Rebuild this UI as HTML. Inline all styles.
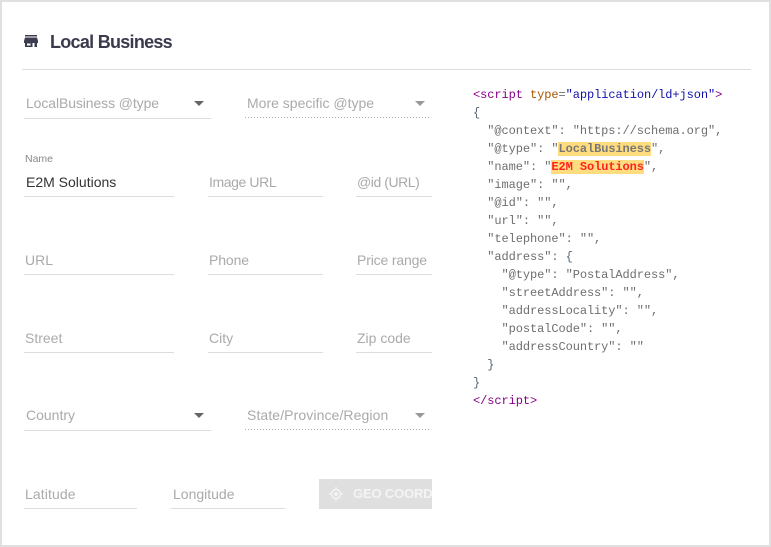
<!DOCTYPE html>
<html><head><meta charset="utf-8">
<style>
html,body{margin:0;padding:0}
body{width:771px;height:547px;position:relative;overflow:hidden;background:#fff;font-family:"Liberation Sans",sans-serif}
.frame{position:absolute;left:0;top:0;width:771px;height:547px;box-sizing:border-box;border:2px solid #e0e0e0}
.t{position:absolute;font-size:14px;line-height:18px;color:#aaa;white-space:nowrap}
.l{position:absolute;height:1px;background:#ddd}
.d{position:absolute;height:1px;background:repeating-linear-gradient(90deg,#aaa 0 1px,transparent 1px 3px)}
.a{position:absolute;width:0;height:0;border-left:5px solid transparent;border-right:5px solid transparent}
pre{position:absolute;left:473px;top:86px;margin:0;font:12px/18px "Liberation Mono",monospace;letter-spacing:-.08px;color:#6e6e6e}
.g{color:#808}.b{color:#11a}.p{color:#a50}.c{color:#567}
.h{background:#ffdd7f;color:#777;font-weight:bold}
.r{background:#ffdd7f;color:#f22;font-weight:bold}
</style></head><body>
<div class="frame"></div>

<svg style="position:absolute;left:24px;top:35px" width="14" height="13" viewBox="0 0 14 13">
<path d="M1 0h12v1.500H1z M1 2.500h12L14 6v2H0V6z M1 8h7.500v4H1z M10.500 8H13v4h-2.500z" fill="#3c3c50"/>
<path d="M3 8.500h3.500v2H3z" fill="#fff"/>
</svg>
<div class="t" style="left:50px;top:31px;font-size:18px;line-height:22px;font-weight:bold;color:#3a3a4e;letter-spacing:-.72px">Local Business</div>
<div class="l" style="left:22px;top:69px;width:729px"></div>

<div class="t" style="left:26px;top:94px;letter-spacing:-.1px">LocalBusiness @type</div>
<div class="a" style="left:194px;top:101px;border-top:5px solid #666"></div>
<div class="l" style="left:24px;top:118px;width:187px"></div>

<div class="t" style="left:247px;top:94px">More specific @type</div>
<div class="a" style="left:415px;top:101px;border-top:5px solid #999"></div>
<div class="d" style="left:245px;top:117px;width:186px"></div>

<div class="t" style="left:25px;top:153px;font-size:10.500px;line-height:12px;color:#888">Name</div>
<div class="t" style="left:26px;top:173px;color:#333">E2M Solutions</div>
<div class="l" style="left:24px;top:196px;width:150px"></div>
<div class="t" style="left:209px;top:173px;letter-spacing:-.4px">Image URL</div>
<div class="l" style="left:208px;top:196px;width:115px"></div>
<div class="t" style="left:357px;top:173px;letter-spacing:-.44px">@id (URL)</div>
<div class="l" style="left:356px;top:196px;width:76px"></div>

<div class="t" style="left:25px;top:251px">URL</div>
<div class="l" style="left:24px;top:274px;width:150px"></div>
<div class="t" style="left:209px;top:251px;letter-spacing:-.1px">Phone</div>
<div class="l" style="left:208px;top:274px;width:115px"></div>
<div class="t" style="left:357px;top:251px;letter-spacing:-.15px">Price range</div>
<div class="l" style="left:356px;top:274px;width:76px"></div>

<div class="t" style="left:25px;top:329px">Street</div>
<div class="l" style="left:24px;top:352px;width:150px"></div>
<div class="t" style="left:209px;top:329px">City</div>
<div class="l" style="left:208px;top:352px;width:115px"></div>
<div class="t" style="left:357px;top:329px">Zip code</div>
<div class="l" style="left:356px;top:352px;width:76px"></div>

<div class="t" style="left:26px;top:406px">Country</div>
<div class="a" style="left:194px;top:413px;border-top:5px solid #666"></div>
<div class="l" style="left:24px;top:430px;width:187px"></div>
<div class="t" style="left:247px;top:406px;letter-spacing:.1px">State/Province/Region</div>
<div class="a" style="left:415px;top:413px;border-top:5px solid #999"></div>
<div class="d" style="left:245px;top:429px;width:186px"></div>

<div class="t" style="left:25px;top:485px;letter-spacing:.1px">Latitude</div>
<div class="l" style="left:24px;top:508px;width:113px"></div>
<div class="t" style="left:173px;top:485px">Longitude</div>
<div class="l" style="left:171px;top:508px;width:114px"></div>

<div style="position:absolute;left:319px;top:479px;width:113px;height:30px;background:#dfdfdf;overflow:hidden">
<svg style="position:absolute;left:10px;top:8px" width="14" height="14" viewBox="0 0 14 14"><circle cx="7" cy="7" r="4.500" fill="none" stroke="#f4f4f4" stroke-width="1.500"/><circle cx="7" cy="7" r="2" fill="#f4f4f4"/><path d="M7 0v3M7 11v3M0 7h3M11 7h3" stroke="#f4f4f4" stroke-width="1.300"/></svg>
<div class="t" style="left:34px;top:6px;font-size:13px;font-weight:bold;color:#f4f4f4;letter-spacing:-.15px">GEO COORD</div>
</div>

<pre><span class="g">&lt;script</span> <span class="p">type</span>=<span class="b">"application/ld+json"</span><span class="g">&gt;</span>
<span class="c">{</span>
  "@context": "https://schema.org",
  "@type": "<span class="h">LocalBusiness</span>",
  "name": "<span class="r">E2M Solutions</span>",
  "image": "",
  "@id": "",
  "url": "",
  "telephone": "",
  "address": <span class="c">{</span>
    "@type": "PostalAddress",
    "streetAddress": "",
    "addressLocality": "",
    "postalCode": "",
    "addressCountry": ""
  <span class="c">}</span>
<span class="c">}</span>
<span class="g">&lt;/script&gt;</span></pre>
</body></html>
